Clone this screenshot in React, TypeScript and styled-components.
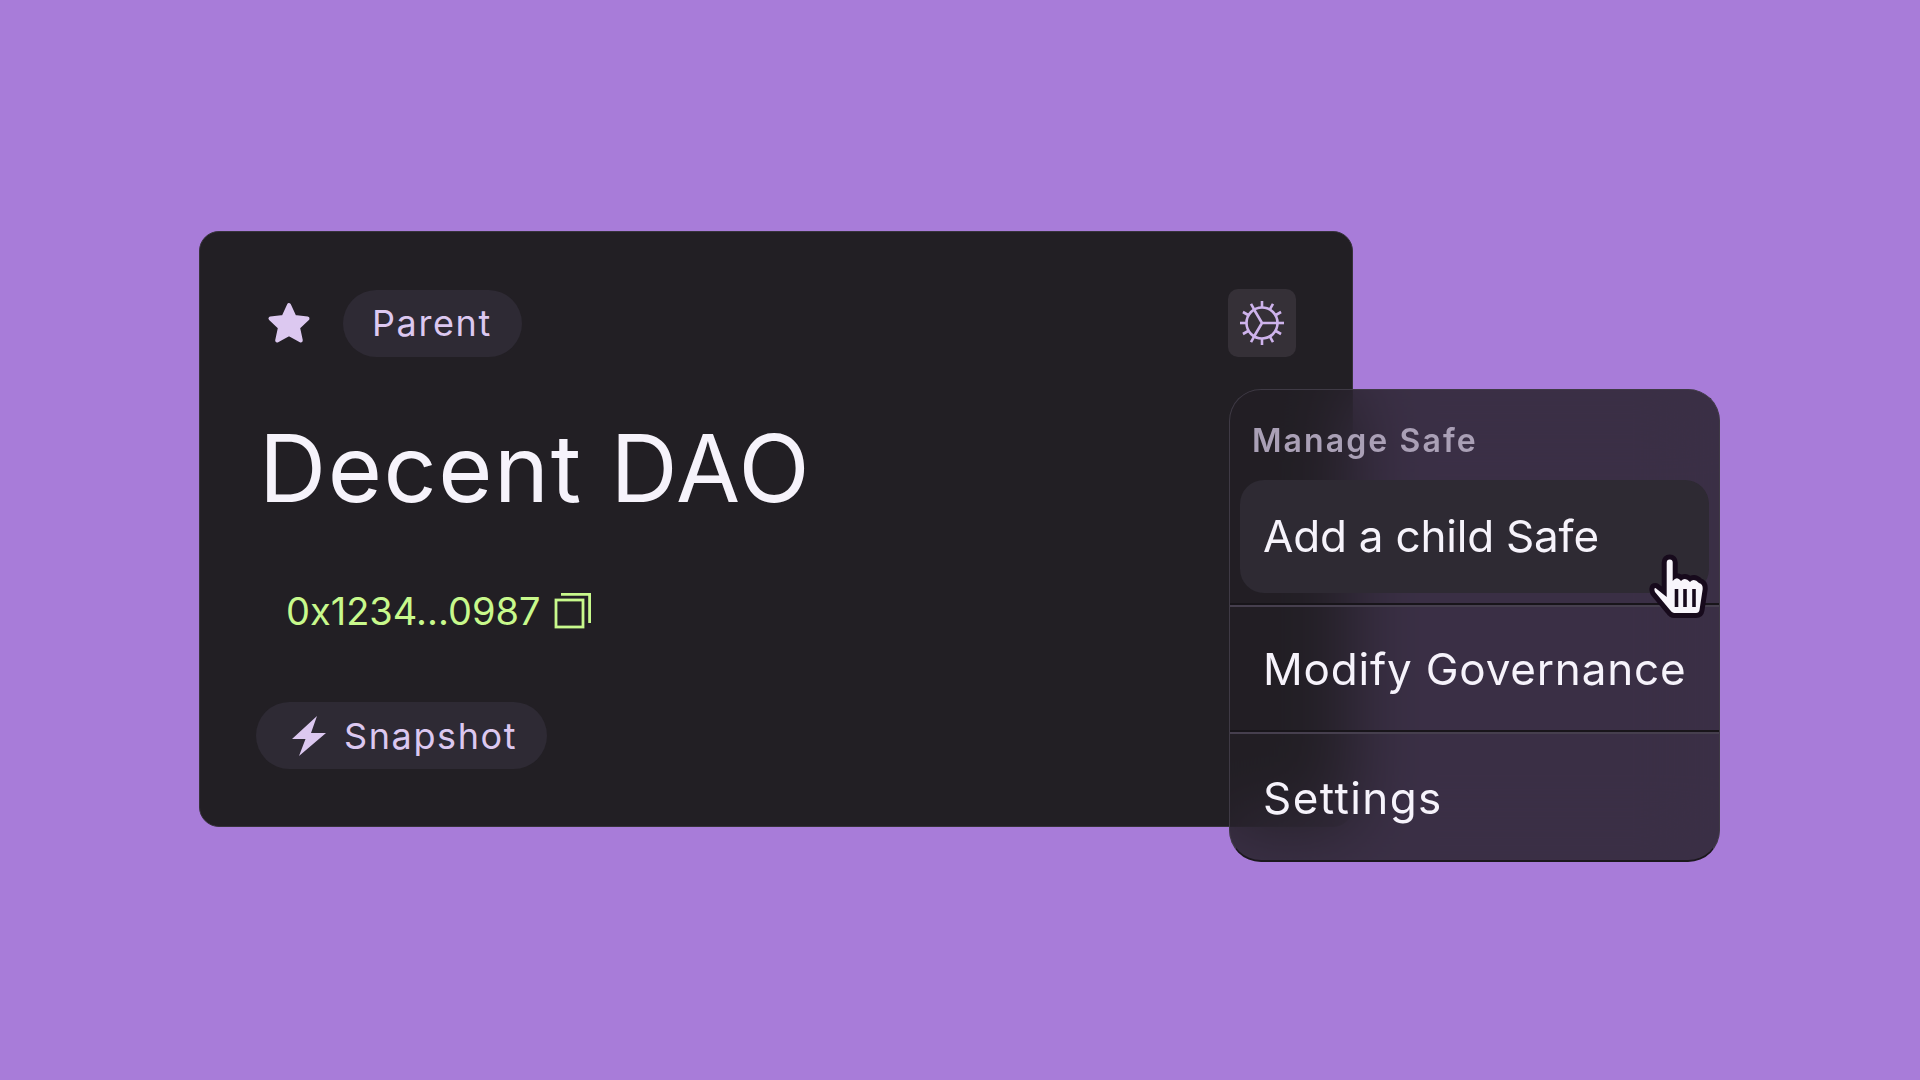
import styled, { createGlobalStyle } from 'styled-components';

const GlobalStyle = createGlobalStyle`
  html, body {
    margin: 0;
    padding: 0;
    background: #a87cd9;
    font-family: Inter, "Noto Sans", sans-serif;
  }
`;

const Stage = styled.main`
  height: 100vh;
  box-sizing: border-box;
  padding: 231px 200px 0 199px;
  overflow: hidden;
`;

const Composite = styled.div`
  position: relative;
  width: 1521px;
`;

const Card = styled.section`
  width: 1154px;
  height: 596px;
  box-sizing: border-box;
  padding: 57px 56px 0 55px;
  display: flex;
  flex-direction: column;
  align-items: flex-start;
  background: #221f24;
  border: 1px solid #37323c;
  border-radius: 20px;
`;

const Header = styled.div`
  display: flex;
  align-items: center;
  justify-content: space-between;
  align-self: stretch;
  padding-left: 11px;
`;

const TagGroup = styled.div`
  display: flex;
  align-items: center;
  gap: 31px;
`;

const Pill = styled.div<{ $left: number; $right: number }>`
  display: flex;
  align-items: center;
  gap: 17px;
  height: 67px;
  box-sizing: border-box;
  padding: 0 ${(p) => p.$right}px 0 ${(p) => p.$left}px;
  background: #2e2a34;
  border-radius: 34px;
  color: #dcc8f0;
  font-size: 36px;
  letter-spacing: 1.6px;
`;

const GearButton = styled.button`
  display: flex;
  align-items: center;
  justify-content: center;
  width: 68px;
  height: 68px;
  padding: 0;
  border: none;
  border-radius: 10px;
  background: #353037;
`;

const Title = styled.h1`
  margin: 55px 0 0 4px;
  font-size: 93px;
  line-height: 112px;
  font-weight: 400;
  letter-spacing: 1.6px;
  color: #f6f3fb;
`;

const Address = styled.div`
  display: flex;
  align-items: center;
  gap: 13px;
  margin: 64px 0 0 31px;
  font-size: 38px;
  line-height: 46px;
  color: #c8f98c;
`;

const SnapshotRow = styled.div`
  margin: 68px 0 0 1px;
`;

const Menu = styled.nav`
  position: absolute;
  top: 158px;
  right: 0;
  width: 491px;
  height: 473px;
  box-sizing: border-box;
  display: flex;
  flex-direction: column;
  background: rgba(34, 31, 36, 0.82);
  backdrop-filter: blur(36px);
  border: 1px solid #3f3a45;
  border-bottom: 2px solid #1b181d;
  border-radius: 32px;
  overflow: hidden;
`;

const MenuHeading = styled.div`
  box-sizing: border-box;
  flex: none;
  height: 90px;
  padding: 31px 22px 0;
  font-size: 32px;
  line-height: 40px;
  font-weight: 600;
  letter-spacing: 2.1px;
  color: #aaa0b6;
`;

const MenuSection = styled.div<{ $height?: number }>`
  height: ${(p) => p.$height ?? 127}px;
  flex: ${(p) => (p.$height ? 'none' : '1')};
  padding: 0 10px;
  display: flex;
  border-bottom: 2px solid #18151a;
  box-shadow: 0 2px 0 #463f4e;

  &:last-child {
    border-bottom: none;
    box-shadow: none;
  }
`;

const MenuItem = styled.div<{ $active?: boolean; $tracking: number }>`
  flex: 1;
  align-self: ${(p) => (p.$active ? 'flex-start' : 'stretch')};
  height: ${(p) => (p.$active ? '113px' : 'auto')};
  box-sizing: border-box;
  display: flex;
  align-items: center;
  padding: ${(p) => (p.$active ? '0 10px 2px 23px' : '3px 10px 0 23px')};
  background: ${(p) => (p.$active ? '#2e2a33' : 'transparent')};
  border-radius: 24px;
  font-size: 44px;
  letter-spacing: ${(p) => p.$tracking}px;
  white-space: nowrap;
  color: #f6f3fb;
`;

const PointerSvg = styled.svg`
  position: absolute;
  top: 323px;
  left: 1449px;
`;

const Star = () => (
  <svg width="46" height="46" viewBox="0 0 46 46">
    <path
      d="M23 5 L28.5 17 L41.5 18.5 L32 27.5 L34.8 40.5 L23 34 L11.2 40.5 L14 27.5 L4.5 18.5 L17.5 17 Z"
      fill="#dcc8f0"
      stroke="#dcc8f0"
      strokeWidth="4"
      strokeLinejoin="round"
    />
  </svg>
);

const ticks = Array.from({ length: 12 }, (_, i) => i * 30);

const Gear = () => (
  <svg width="48" height="48" viewBox="0 0 48 48" fill="none" stroke="#ceb3ec" strokeWidth="2.6">
    <circle cx="24" cy="24" r="15.5" />
    {ticks.map((a) => (
      <line key={a} x1="24" y1="8.5" x2="24" y2="2" transform={`rotate(${a} 24 24)`} />
    ))}
    <path d="M24 24 H39.5 M24 24 L16 10.5 M24 24 L16 37.5" />
  </svg>
);

const Copy = () => (
  <svg width="38" height="38" viewBox="0 0 38 38" fill="none" stroke="#c8f98c" strokeWidth="2.8">
    <rect x="2" y="8" width="27" height="27" />
    <path d="M7 2.4 H35.6 V31" />
  </svg>
);

const Bolt = () => (
  <svg width="36" height="42" viewBox="0 0 36 42">
    <path d="M26 1 L1 24 L14.5 24 L8 41 L35 18 L20 18 Z" fill="#dcc8f0" />
  </svg>
);

const HandCursor = () => (
  <PointerSvg width="60" height="66" viewBox="0 0 60 66">
    <path
      d="M7.5 34 L18.7 43 V8.5 Q18.7 5.5 21.7 5.5 Q24.7 5.5 24.7 8.5 V27 Q29 21.5 33 27 Q37 22.5 42 28 Q46 23.5 51 29 Q55 30 54.7 35 L51.5 56 Q51 59 48 59 L26 59 Q24 59 22 56 L7 38 Q5.5 34 7.5 34 Z"
      fill="#f8f5fb"
      stroke="#170a1c"
      strokeWidth="10"
      strokeLinejoin="round"
      paintOrder="stroke"
    />
    <path d="M28.5 35 V53 M37 35 V53 M46 35 V53" stroke="#170a1c" strokeWidth="3.6" />
  </PointerSvg>
);

export default function App() {
  return (
    <Stage>
      <GlobalStyle />
      <Composite>
        <Card>
          <Header>
            <TagGroup>
              <Star />
              <Pill $left={29} $right={30}>
                Parent
              </Pill>
            </TagGroup>
            <GearButton aria-label="Settings">
              <Gear />
            </GearButton>
          </Header>
          <Title>Decent DAO</Title>
          <Address>
            0x1234...0987
            <Copy />
          </Address>
          <SnapshotRow>
            <Pill $left={35} $right={30}>
              <Bolt />
              Snapshot
            </Pill>
          </SnapshotRow>
        </Card>
        <Menu>
          <MenuHeading>Manage Safe</MenuHeading>
          <MenuSection $height={123}>
            <MenuItem $active $tracking={-0.2}>
              Add a child Safe
            </MenuItem>
          </MenuSection>
          <MenuSection $height={125}>
            <MenuItem $tracking={0.8}>Modify Governance</MenuItem>
          </MenuSection>
          <MenuSection>
            <MenuItem $tracking={1.4}>Settings</MenuItem>
          </MenuSection>
        </Menu>
        <HandCursor />
      </Composite>
    </Stage>
  );
}
